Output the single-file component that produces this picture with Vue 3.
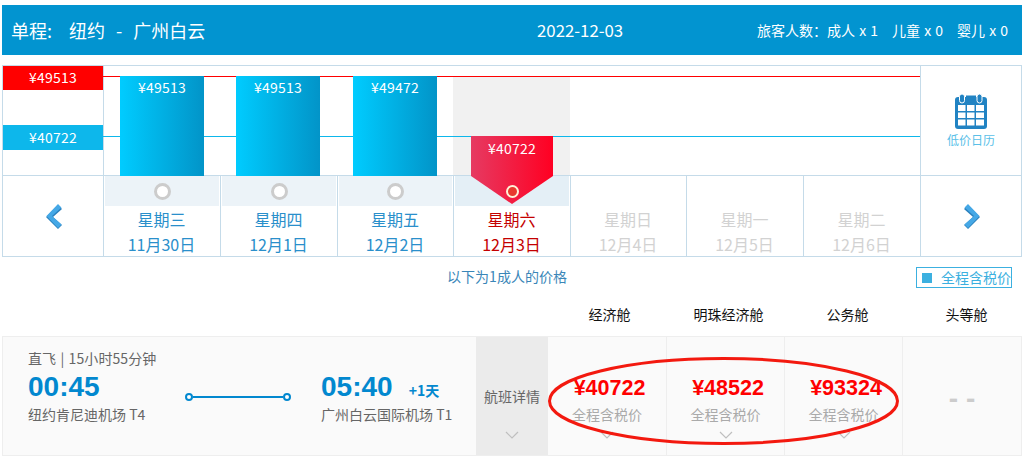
<script setup>
const chartDays = [
  { price: '¥49513' },
  { price: '¥49513' },
  { price: '¥49472' },
  { price: '¥40722', selected: true },
  {},
  {},
  {}
]
const days = [
  { week: '星期三', date: '11月30日', state: 'on' },
  { week: '星期四', date: '12月1日', state: 'on' },
  { week: '星期五', date: '12月2日', state: 'on' },
  { week: '星期六', date: '12月3日', state: 'selected' },
  { week: '星期日', date: '12月4日', state: 'off' },
  { week: '星期一', date: '12月5日', state: 'off' },
  { week: '星期二', date: '12月6日', state: 'off' }
]
const cabins = ['经济舱', '明珠经济舱', '公务舱', '头等舱']
const prices = ['¥40722', '¥48522', '¥93324']
</script>

<template>
  <div class="page">
    <header class="banner">
      <div class="route"><span class="trip">单程:</span><span>纽约</span><span>-</span><span>广州白云</span></div>
      <div class="when">2022-12-03</div>
      <div class="people"><span>旅客人数：成人 x 1</span><span>儿童 x 0</span><span>婴儿 x 0</span></div>
    </header>

    <section class="calendar">
      <div class="chart-row">
        <div class="scale">
          <div class="scale-high">¥49513</div>
          <div class="scale-low">¥40722</div>
        </div>
        <div v-for="(d, i) in chartDays" :key="i" class="chart-col" :class="{ current: d.selected }">
          <div v-if="d.price && !d.selected" class="bar">{{ d.price }}</div>
          <div v-if="d.selected" class="flag">{{ d.price }}</div>
        </div>
        <div class="low-cal">
          <svg width="32" height="35" viewBox="0 0 32 35">
            <path d="M3 3h26a3 3 0 0 1 3 3v26a3 3 0 0 1-3 3H3a3 3 0 0 1-3-3V6a3 3 0 0 1 3-3z" fill="#2183c3" />
            <rect x="11" y="1.500" width="10" height="4" fill="#2183c3" />
            <rect x="4.500" y="0" width="5" height="9" rx="2.500" fill="#2183c3" stroke="#fff" />
            <rect x="22" y="0" width="5" height="9" rx="2.500" fill="#2183c3" stroke="#fff" />
            <g fill="#fff">
              <rect x="3" y="11" width="7.500" height="6" /><rect x="12" y="11" width="7.500" height="6" /><rect x="21" y="11" width="8" height="6" />
              <rect x="3" y="18.500" width="7.500" height="5.500" /><rect x="12" y="18.500" width="7.500" height="5.500" /><rect x="21" y="18.500" width="8" height="5.500" />
              <rect x="3" y="25.500" width="7.500" height="6" /><rect x="12" y="25.500" width="7.500" height="6" /><rect x="21" y="25.500" width="8" height="6" />
            </g>
          </svg>
          <span>低价日历</span>
        </div>
        <i class="rule rule-high"></i>
        <i class="rule rule-low"></i>
      </div>

      <div class="day-row">
        <div class="nav">
          <svg width="16" height="25" viewBox="0 0 16 25">
            <polygon points="12,1 16,5 7,13 16,21 12,25 0,13" fill="#2a80bd" />
            <polygon points="12,0 15.500,3.500 6,12 15.500,20.500 12,24 0.500,12" fill="#45a8e6" />
          </svg>
        </div>
        <div v-for="d in days" :key="d.date" class="day" :class="d.state">
          <div class="pick"><span v-if="d.state !== 'off'" class="radio"></span></div>
          <div class="week">{{ d.week }}</div>
          <div class="date">{{ d.date }}</div>
        </div>
        <div class="nav nav-next">
          <svg width="16" height="25" viewBox="0 0 16 25">
            <polygon points="4,1 0,5 9,13 0,21 4,25 16,13" fill="#2a80bd" />
            <polygon points="4,0 0.500,3.500 10,12 0.500,20.500 4,24 15.500,12" fill="#45a8e6" />
          </svg>
        </div>
      </div>
    </section>

    <div class="notice">
      <span class="notice-text">以下为1成人的价格</span>
      <span class="tax-tag"><i></i>全程含税价</span>
    </div>

    <div class="cabins">
      <div v-for="c in cabins" :key="c">{{ c }}</div>
    </div>

    <section class="flight">
      <div class="info">
        <div class="summary">直飞 | 15小时55分钟</div>
        <div class="legs">
          <div class="time">00:45</div>
          <div class="link"><i></i><b></b><i></i></div>
          <div class="time">05:40<span class="plus">+1天</span></div>
          <div class="port">纽约肯尼迪机场 T4</div>
          <div></div>
          <div class="port">广州白云国际机场 T1</div>
        </div>
      </div>
      <div class="detail">
        <span>航班详情</span>
        <svg class="chev" width="14" height="8" viewBox="0 0 14 8"><polyline points="1,1 7,7 13,1" /></svg>
      </div>
      <div v-for="p in prices" :key="p" class="fare">
        <div class="amount">{{ p }}</div>
        <div class="tax">全程含税价</div>
        <svg class="chev" width="14" height="8" viewBox="0 0 14 8"><polyline points="1,1 7,7 13,1" /></svg>
      </div>
      <div class="fare none">- -</div>
      <svg class="circle" width="354" height="90" viewBox="0 0 354 90">
        <ellipse cx="176.500" cy="45" rx="174" ry="42.500" />
      </svg>
    </section>
  </div>
</template>

<style>
html, body { margin: 0; background: #fff; }
</style>

<style scoped>
.page {
  width: 1028px;
  height: 463px;
  box-sizing: border-box;
  padding: 5px 6px 0 2px;
  overflow: hidden;
  background: #fff;
  font-family: "Noto Sans CJK SC", "Liberation Sans", sans-serif;
  font-size: 14px;
}
.banner {
  height: 50px;
  background: #0294d0;
  color: #fff;
  display: grid;
  grid-template-columns: 535px 215px 1fr;
  align-items: center;
}
.route {
  font-size: 18px;
  padding-left: 9px;
  display: flex;
  gap: 11px;
}
.trip { width: 47px; }
.when { font-size: 16.800px; }
.people {
  display: flex;
  gap: 14px;
  padding-left: 5px;
  word-spacing: 1px;
}

.calendar {
  margin-top: 10px;
  width: 1020px;
  box-sizing: border-box;
  border: 1px solid #c5dbe9;
}
.chart-row, .day-row {
  display: grid;
  grid-template-columns: 100px 117px 117px 116px 117px 116px 117px 117px 101px;
}
.chart-row { height: 110px; position: relative; }
.day-row { height: 80px; }

.scale {
  border-bottom: 1px solid #c5dbe9;
  color: #fff;
  text-align: center;
  position: relative;
  z-index: 2;
  letter-spacing: 0.2px;
}
.scale-high { height: 24px; line-height: 22px; background: #f00; }
.scale-low { height: 25px; line-height: 24px; background: #0db7eb; margin-top: 35px; }

.chart-col {
  border-bottom: 1px solid #c5dbe9;
  position: relative;
  display: flex;
  align-items: flex-end;
}
.chart-col:nth-child(2) { border-left: 1px solid #c5dbe9; }
.chart-col.current {
  background: linear-gradient(#f1f1f1, #f1f1f1) no-repeat 0 11px / 100% 100%;
}
.bar {
  position: relative;
  z-index: 1;
  width: 84px;
  height: 100px;
  margin: 0 0 -1px 16px;
  padding-top: 2px;
  box-sizing: border-box;
  background: linear-gradient(90deg, #00ccff, #0294c8);
  color: #fff;
  text-align: center;
  line-height: 18px;
  letter-spacing: 0.2px;
}
.flag {
  position: absolute;
  z-index: 3;
  left: 18px;
  top: 70px;
  width: 82px;
  height: 68px;
  padding-top: 3px;
  box-sizing: border-box;
  background: linear-gradient(90deg, #e63a62, #ff0022);
  clip-path: polygon(0 0, 100% 0, 100% 40px, 50% 100%, 0 40px);
  color: #fff;
  text-align: center;
  line-height: 18px;
  letter-spacing: 0.2px;
}
.low-cal {
  border-left: 1px solid #c5dbe9;
  border-bottom: 1px solid #c5dbe9;
  background: #fff;
  position: relative;
  z-index: 2;
  color: #5abfe8;
  font-size: 12px;
  line-height: 16px;
  display: flex;
  flex-direction: column;
  align-items: center;
  padding-top: 28px;
  box-sizing: border-box;
}
.low-cal svg { margin-bottom: 3px; }
.rule {
  position: absolute;
  left: 100px;
  width: 817px;
  height: 1px;
}
.rule-high { top: 10px; background: #f00; }
.rule-low { top: 70px; background: #0db7eb; }

.nav {
  display: flex;
  align-items: center;
  justify-content: center;
  padding-left: 2px;
}
.nav-next {
  border-left: 1px solid #c5dbe9;
}
.day {
  border-left: 1px solid #c5dbe9;
  padding-right: 1px;
  text-align: center;
  color: #2a8fcb;
  font-size: 16px;
}
.pick {
  height: 30px;
  margin-left: 1px;
  background: #ecf3f8;
  display: flex;
  align-items: center;
  justify-content: center;
}
.radio {
  width: 17px;
  height: 17px;
  box-sizing: border-box;
  border-radius: 50%;
  border: 3px solid #ccc;
  background: #fff;
}
.day.off { color: #d2d2d2; }
.day.off .pick { background: transparent; }
.day.selected { color: #c40000; }
.day.selected .pick { background: #e4eff6; }
.day.selected .radio {
  position: relative;
  z-index: 4;
  width: 13px;
  height: 13px;
  border: 2px solid #fff2d8;
  background: #e8392e;
}
.week { height: 25px; line-height: 26px; }
.date { height: 24px; line-height: 26px; }

.notice {
  height: 42px;
  position: relative;
  display: flex;
  justify-content: center;
  padding-top: 8px;
  box-sizing: border-box;
  width: 1010px;
}
.notice-text { color: #3a86b8; line-height: 22px; }
.tax-tag {
  position: absolute;
  right: 0;
  top: 10px;
  width: 96px;
  height: 21px;
  box-sizing: border-box;
  border: 1px solid #3cb0e0;
  color: #3cb0e0;
  line-height: 19px;
  white-space: nowrap;
  display: flex;
  align-items: center;
}
.tax-tag i {
  width: 10px;
  height: 10px;
  background: #3cb0e0;
  margin: 0 9px 0 5px;
}
.cabins {
  display: grid;
  grid-template-columns: repeat(4, 119px);
  padding-left: 548px;
  height: 37px;
  color: #111;
  text-align: center;
  line-height: 30px;
}

.flight {
  position: relative;
  width: 1020px;
  height: 120px;
  box-sizing: border-box;
  border: 1px solid #eee;
  background: #fafafa;
  display: grid;
  grid-template-columns: 473px 72px 119px 118px 118px 1fr;
  color: #666;
}
.info { padding: 12px 0 0 25px; }
.summary { line-height: 18px; word-spacing: 1px; letter-spacing: 0.1px; }
.legs {
  display: grid;
  grid-template-columns: 157px 106px 1fr;
  margin-top: 5px;
}
.time {
  font-family: "Liberation Sans", sans-serif;
  font-weight: 700;
  font-size: 28px;
  line-height: 30px;
  color: #0288cf;
}
.legs .time:nth-child(3) { padding-left: 30px; }
.plus {
  font-size: 14px;
  margin-left: 16px;
  font-weight: 700;
  font-family: "Noto Sans CJK SC", sans-serif;
}
.port { line-height: 18px; white-space: nowrap; }
.legs .port:nth-child(6) { padding-left: 30px; }
.link {
  display: flex;
  align-items: center;
  height: 30px;
  padding-top: 20px;
  box-sizing: border-box;
}
.link i {
  width: 8px;
  height: 8px;
  box-sizing: border-box;
  border-radius: 50%;
  border: 2px solid #0288cf;
  background: #fff;
}
.link b { width: 90px; height: 2px; background: #0288cf; }

.detail {
  background: #ebebeb;
  position: relative;
  display: flex;
  align-items: flex-start;
  justify-content: center;
  padding-top: 49px;
  box-sizing: border-box;
  line-height: 20px;
}
.chev {
  position: absolute;
  left: 50%;
  margin-left: -7px;
  top: 94px;
  fill: none;
  stroke: #bfbfbf;
  stroke-width: 1.200;
}
.fare {
  position: relative;
  border-right: 1px solid #eee;
  text-align: center;
  padding-top: 37px;
  box-sizing: border-box;
}
.amount {
  font-family: "Liberation Sans", "Noto Sans CJK SC", sans-serif;
  font-weight: 700;
  font-size: 21.500px;
  line-height: 28px;
  color: #f00;
  padding-left: 5px;
}
.tax { color: #aaa; line-height: 20px; margin-top: 2px; }
.none {
  border-right: 0;
  padding-top: 50px;
  font-family: "Liberation Sans", sans-serif;
  font-weight: 700;
  font-size: 28px;
  line-height: 24px;
  color: #ccc;
}
.circle {
  position: absolute;
  left: 544px;
  top: 19px;
  fill: none;
  stroke: #f3190f;
  stroke-width: 3;
  pointer-events: none;
}
</style>
